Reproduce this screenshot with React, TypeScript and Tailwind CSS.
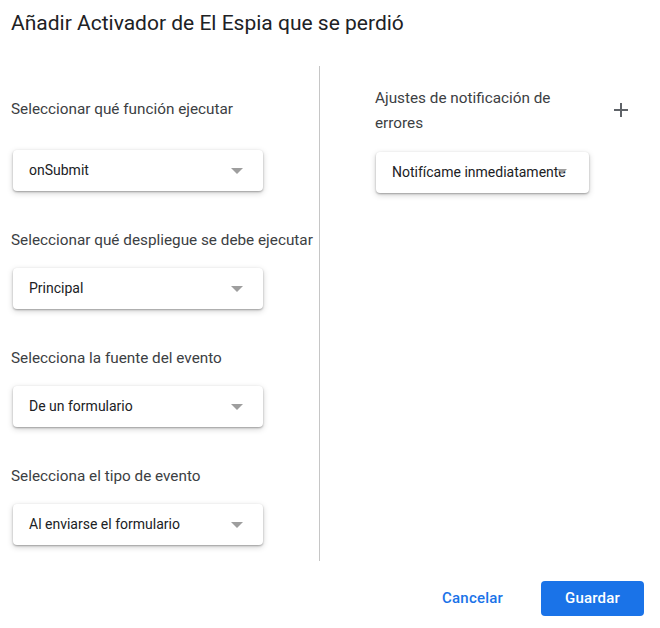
import React from 'react';

const fields = [
  { label: 'Seleccionar qué función ejecutar', value: 'onSubmit' },
  { label: 'Seleccionar qué despliegue se debe ejecutar', value: 'Principal' },
  { label: 'Selecciona la fuente del evento', value: 'De un formulario' },
  { label: 'Selecciona el tipo de evento', value: 'Al enviarse el formulario' },
];

const Arrow: React.FC = () => (
  <svg width="12" height="6" viewBox="0 0 12 6" className="shrink-0">
    <path d="M0 0h12L6 6z" fill="#9e9e9e" />
  </svg>
);

const SelectBox: React.FC<{ value: string; className?: string }> = ({ value, className }) => (
  <div
    className={
      'relative flex items-center h-[41px] rounded-[4px] bg-white pl-[16px] text-[14px] text-[#202124] shadow-[0_1px_2px_rgba(0,0,0,0.3),0_2px_6px_rgba(0,0,0,0.18)] ' +
      (className ?? '')
    }
  >
    <span className="whitespace-nowrap">{value}</span>
    <span className="absolute right-[20px] top-[18px]">
      <Arrow />
    </span>
  </div>
);

export default function App() {
  return (
    <div className="w-[660px] h-[628px] bg-white font-['Roboto',sans-serif] text-[#202124]">
      <h1 className="pt-[9px] pl-[11px] text-[21px] leading-[28px] text-[#202124]">
        Añadir Activador de El Espia que se perdió
      </h1>

      <div className="flex mt-[29px]">
        <div className="w-[319px] pl-[11px] pr-[40px] pb-[16px]">
          {fields.map((f, i) => (
            <div key={f.label}>
              <div
                className={
                  'text-[15.3px] leading-[24px] text-[#3c4043] whitespace-nowrap ' +
                  (i === 0 ? 'mt-[31px]' : 'mt-[37px]')
                }
              >
                {f.label}
              </div>
              <SelectBox
                value={f.value}
                className={'ml-[2px] w-[250px] ' + (i === 0 ? 'mt-[29px]' : 'mt-[16px]')}
              />
            </div>
          ))}
        </div>

        <div className="w-px bg-[#c6c6c6]" />

        <div className="flex-1 pl-[55px] pr-[32px]">
          <div className="flex justify-between items-start mt-[20px]">
            <div className="w-[200px] text-[15.3px] leading-[25px] text-[#3c4043]">
              Ajustes de notificación de errores
            </div>
            <svg width="14" height="14" viewBox="0 0 14 14" className="mt-[17px]">
              <path d="M7 0v14M0 7h14" stroke="#5f6368" strokeWidth="2" />
            </svg>
          </div>
          <div className="relative mt-[16px] ml-[1px] w-[213px] h-[41px] rounded-[4px] bg-white pl-[16px] flex items-center text-[14px] text-[#202124] shadow-[0_1px_2px_rgba(0,0,0,0.3),0_2px_6px_rgba(0,0,0,0.18)]">
            <span className="whitespace-nowrap">Notifícame inmediatamente</span>
            <span className="absolute left-[181px] top-[17px]">
              <svg width="10" height="5" viewBox="0 0 10 5">
                <path d="M0 0h10L5 5z" fill="#9e9e9e" />
              </svg>
            </span>
          </div>
        </div>
      </div>

      <div className="flex justify-end items-center gap-[22px] mt-[20px] pr-[16px]">
        <button className="h-[35px] px-[16px] text-[15px] font-medium text-[#1a73e8] tracking-[0.2px]">
          Cancelar
        </button>
        <button className="h-[35px] w-[103px] rounded-[4px] bg-[#1a73e8] text-[15px] font-medium text-white tracking-[0.2px]">
          Guardar
        </button>
      </div>
    </div>
  );
}
